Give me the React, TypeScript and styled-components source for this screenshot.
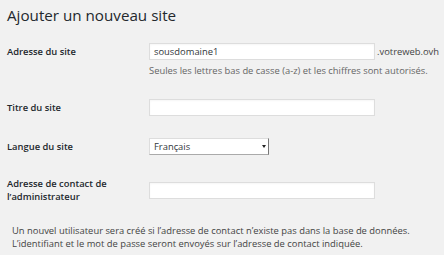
import React from 'react';
import styled, { createGlobalStyle } from 'styled-components';

const GlobalStyle = createGlobalStyle`
  html, body {
    margin: 0;
    padding: 0;
    background: #f1f1f1;
  }
  body {
    font-family: 'Open Sans', 'Noto Sans', sans-serif;
    font-size: 9.4px;
    color: #444;
  }
`;

const Page = styled.div`
  width: 444px;
  height: 255px;
  padding: 4px 0 0 7px;
  box-sizing: border-box;
  overflow: hidden;
`;

const Title = styled.h1`
  margin: 0 0 16px;
  font-size: 15.2px;
  font-weight: 400;
  line-height: 23px;
  color: #23282d;
`;

const Rows = styled.div`
  display: flex;
  flex-direction: column;
  gap: 22px;
`;

const Row = styled.div<{ $top?: boolean }>`
  display: grid;
  grid-template-columns: 142px 1fr;
  align-items: ${(p) => (p.$top ? 'start' : 'center')};
`;

const Label = styled.label<{ $top?: boolean }>`
  font-weight: 600;
  color: #23282d;
  line-height: 13px;
  padding-top: ${(p) => (p.$top ? '2px' : '0')};
`;

const Field = styled.div`
  display: flex;
  flex-direction: column;
`;

const Inline = styled.div`
  display: flex;
  align-items: center;
  gap: 2px;
`;

const TextInput = styled.input`
  width: 226px;
  height: 17px;
  box-sizing: border-box;
  margin: 0;
  padding: 0 4px;
  border: 1px solid #ddd;
  background: #fff;
  box-shadow: inset 0 1px 2px rgba(0, 0, 0, 0.04);
  font-family: inherit;
  font-size: 9.4px;
  color: #32373c;
  outline: none;
`;

const Suffix = styled.span`
  color: #444;
`;

const Help = styled.p`
  margin: 4px 0 0;
  line-height: 13px;
  color: #666;
  white-space: nowrap;
`;

const Select = styled.div`
  width: 120px;
  height: 17px;
  box-sizing: border-box;
  border: 1px solid #ddd;
  border-right: 1px solid #777;
  border-bottom-color: #aaa;
  background: #fff;
  display: flex;
  align-items: center;
  justify-content: space-between;
  padding: 0 2px 0 4px;
  color: #32373c;
`;

const Arrow = styled.span`
  width: 0;
  height: 0;
  border-left: 2px solid transparent;
  border-right: 2px solid transparent;
  border-top: 3px solid #222;
`;

const Note = styled.p`
  margin: 22px 0 0;
  padding-left: 5px;
  line-height: 12.5px;
  color: #444;
  white-space: nowrap;
`;

const App = () => {
  return (
    <Page>
      <GlobalStyle />
      <Title>Ajouter un nouveau site</Title>
      <Rows>
        <Row $top>
          <Label $top>Adresse du site</Label>
          <Field>
            <Inline>
              <TextInput defaultValue="sousdomaine1" />
              <Suffix>.votreweb.ovh</Suffix>
            </Inline>
            <Help>Seules les lettres bas de casse (a-z) et les chiffres sont autorisés.</Help>
          </Field>
        </Row>
        <Row>
          <Label>Titre du site</Label>
          <TextInput />
        </Row>
        <Row>
          <Label>Langue du site</Label>
          <Select>
            <span>Français</span>
            <Arrow />
          </Select>
        </Row>
        <Row>
          <Label>
            Adresse de contact de
            <br />
            l’administrateur
          </Label>
          <TextInput />
        </Row>
      </Rows>
      <Note>
        Un nouvel utilisateur sera créé si l’adresse de contact n’existe pas dans la base de données.
        <br />
        L’identifiant et le mot de passe seront envoyés sur l’adresse de contact indiquée.
      </Note>
    </Page>
  );
};

export default App;
